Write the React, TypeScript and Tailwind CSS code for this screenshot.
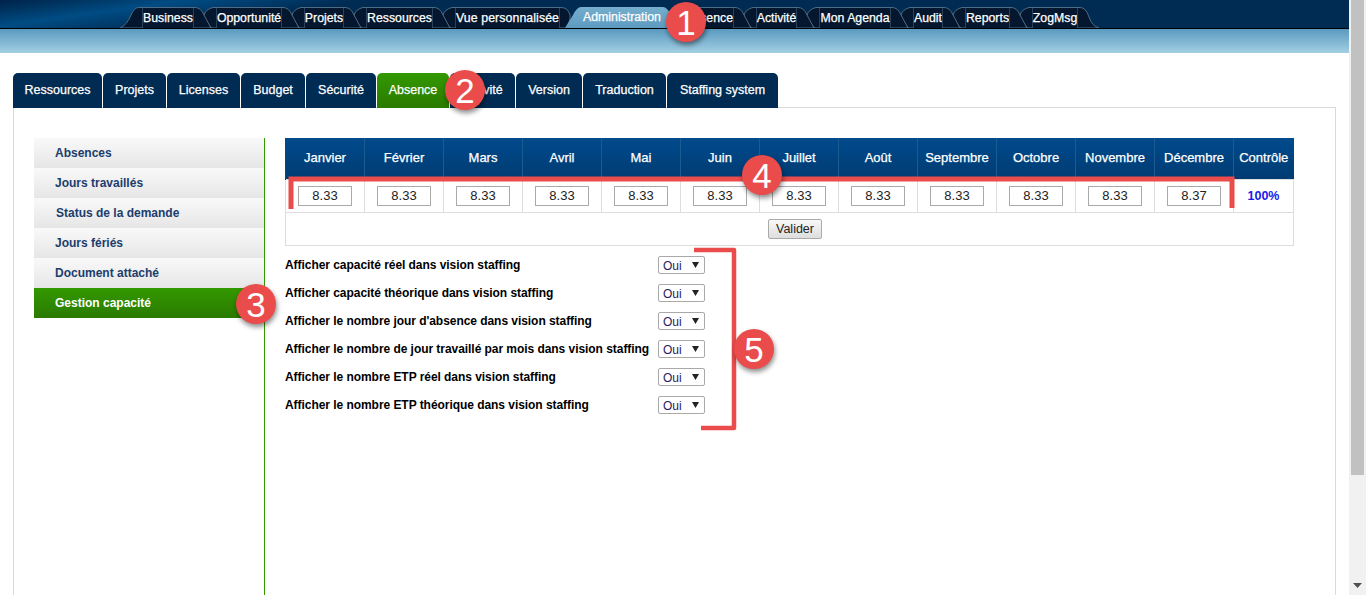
import React from "react";

const DARK = "#04172e";
const EDGE = "#4f6c86";

const topTabs = [
  { label: "Business", w: "w-[50px] justify-center" },
  { label: "Opportunité", w: "w-[64px] justify-center" },
  { label: "Projets", w: "w-[38px] justify-center" },
  { label: "Ressources", w: "w-[65px] justify-center" },
  { label: "Vue personnalisée", w: "w-[103px] justify-center tracking-[0.1px]" },
  { label: "Administration", w: "w-[78px] justify-center", active: true },
  { label: "Présence", w: "w-[48px] justify-end" },
  { label: "Activité", w: "w-[39px] justify-center" },
  { label: "Mon Agenda", w: "w-[70px] justify-center" },
  { label: "Audit", w: "w-[28px] justify-center" },
  { label: "Reports", w: "w-[43px] justify-center" },
  { label: "ZogMsg", w: "w-[44px] justify-center" },
];

const subTabs = [
  { label: "Ressources", w: "w-[89px]" },
  { label: "Projets", w: "w-[63px]" },
  { label: "Licenses", w: "w-[73px]" },
  { label: "Budget", w: "w-[64px]" },
  { label: "Sécurité", w: "w-[70px]" },
  { label: "Absence", w: "w-[72px]", active: true },
  { label: "Activité", w: "w-[65px]" },
  { label: "Version", w: "w-[66px]" },
  { label: "Traduction", w: "w-[83px]" },
  { label: "Staffing system", w: "w-[111px]" },
];

const sideItems = ["Absences", "Jours travaillés", "Status de la demande", "Jours fériés", "Document attaché", "Gestion capacité"];

const months = ["Janvier", "Février", "Mars", "Avril", "Mai", "Juin", "Juillet", "Août", "Septembre", "Octobre", "Novembre", "Décembre"];
const values = ["8.33", "8.33", "8.33", "8.33", "8.33", "8.33", "8.33", "8.33", "8.33", "8.33", "8.33", "8.37"];

const settings = [
  "Afficher capacité réel dans vision staffing",
  "Afficher capacité théorique dans vision staffing",
  "Afficher le nombre jour d'absence dans vision staffing",
  "Afficher le nombre de jour travaillé par mois dans vision staffing",
  "Afficher le nombre ETP réel dans vision staffing",
  "Afficher le nombre ETP théorique dans vision staffing",
];

// joint between two top tabs, 24px wide, the tab drawn active goes on top
function TabJoint({ leftActive, rightActive }: { leftActive?: boolean; rightActive?: boolean }) {
  if (rightActive) {
    return (
      <svg width="24" height="21" className="block shrink-0">
        <path d="M0 0.5L2 0.5Q9 0.5 11 8Q12 13 7 21L0 21Z" fill={DARK} stroke={EDGE} />
        <path d="M24 0L22 0Q18 0 14 8L6 21L24 21Z" fill="url(#activeTab)" />
      </svg>
    );
  }
  if (leftActive) {
    return (
      <svg width="24" height="21" className="block shrink-0">
        <path d="M24 0.5L20 0.5Q13 2 11 8Q10 14 19 21L24 21Z" fill={DARK} stroke={EDGE} />
        <path d="M0 0L2 0Q6 0 10 8L18 21L0 21Z" fill="url(#activeTab)" />
      </svg>
    );
  }
  return (
    <svg width="24" height="21" className="block shrink-0">
      <path d="M24 0.5L20 0.5Q13 2 11 8Q10 14 19 21L24 21Z" fill={DARK} stroke={EDGE} />
      <path d="M0 0.5L2 0.5Q8 0.5 11 8L18 21L0 21Z" fill={DARK} stroke={EDGE} />
    </svg>
  );
}

function TopNav() {
  return (
    <div className="flex h-[28px] items-end bg-[linear-gradient(172deg,#00234a_0%,#00305a_4%,#004c84_12%,#002b52_24%)] pl-[120px]">
      <svg width="0" height="0" className="absolute">
        <defs>
          <linearGradient id="activeTab" x1="0" y1="0" x2="0" y2="1">
            <stop offset="0" stopColor="#75aecd" />
            <stop offset="1" stopColor="#5d9bc0" />
          </linearGradient>
        </defs>
      </svg>
      <svg width="23" height="21" className="block shrink-0">
        <path d="M0 21Q7 18 11 8Q14 0.5 19 0.5L23 0.5L23 21Z" fill={DARK} stroke={EDGE} />
      </svg>
      {topTabs.map((t, i) => (
        <React.Fragment key={t.label}>
          <div
            className={`flex h-[21px] shrink-0 items-center whitespace-nowrap text-[12.3px] text-white [-webkit-text-stroke:0.25px_white] ${t.w} ${
              t.active ? "bg-gradient-to-b from-[#75aecd] to-[#5d9bc0]" : "border-t border-[#4f6c86] bg-[#04172e]"
            }`}
          >
            {t.label}
          </div>
          {i < topTabs.length - 1 && <TabJoint leftActive={t.active} rightActive={topTabs[i + 1].active} />}
        </React.Fragment>
      ))}
      <svg width="23" height="21" className="block shrink-0">
        <path d="M0 0.5L3 0.5Q9 0.5 12 10Q15 19 22 21L0 21Z" fill={DARK} stroke={EDGE} />
      </svg>
    </div>
  );
}

function SubTabs() {
  return (
    <div className="relative z-10 -mb-px flex h-[35px] gap-px">
      {subTabs.map((t) => (
        <div
          key={t.label}
          className={`flex items-center justify-center whitespace-nowrap rounded-t-[5px] text-[12.5px] text-white [-webkit-text-stroke:0.25px_white] ${t.w} ${
            t.active ? "bg-gradient-to-b from-[#339900] to-[#2a7a00]" : "bg-[#002b52]"
          }`}
        >
          {t.label}
        </div>
      ))}
    </div>
  );
}

function Sidebar() {
  return (
    <div className="h-[457px] w-[231px] shrink-0 border-r border-[#339900]">
      {sideItems.map((s, i) => {
        const active = i === sideItems.length - 1;
        return (
          <div
            key={s}
            className={`flex h-[30px] items-center text-[12px] font-bold ${i === 2 ? "pl-[22px]" : "pl-[21px]"} ${
              active ? "bg-gradient-to-b from-[#339900] to-[#2a7a00] text-white" : "bg-gradient-to-b from-[#f9f9f9] to-[#e6e6e6] text-[#1b3d6d]"
            }`}
          >
            {s}
          </div>
        );
      })}
    </div>
  );
}

function CapacityTable() {
  return (
    <table className="w-[1009px] table-fixed border-collapse text-[12.5px]">
      <thead>
        <tr className="h-[41px] bg-gradient-to-b from-[#004b8d] to-[#003b72] text-white">
          {months.map((m, i) => (
            <th
              key={m}
              className={`w-[79px] border-r border-[#1c5a92] pb-px text-[13px] font-normal [-webkit-text-stroke:0.25px_white] ${i === 0 ? "border-l border-l-[#004b8d]" : ""}`}
            >
              {m}
            </th>
          ))}
          <th className="pb-px text-[13px] font-normal [-webkit-text-stroke:0.25px_white]">Contrôle</th>
        </tr>
      </thead>
      <tbody>
        <tr className="h-[33px]">
          {values.map((v, i) => (
            <td key={i} className="border border-[#dddddd] text-center">
              <input
                readOnly
                value={v}
                className="h-[20px] w-[54px] border border-[#aaaaaa] bg-white text-center align-middle text-[13px] text-[#222222] outline-none"
              />
            </td>
          ))}
          <td className="border border-[#dddddd] pt-px text-center font-bold text-[#1a1ae6]">100%</td>
        </tr>
        <tr className="h-[33px]">
          <td colSpan={13} className="border border-[#dddddd] pl-[11px] text-center">
            <button className="h-[20px] w-[54px] rounded-[2px] border border-[#aaaaaa] bg-gradient-to-b from-[#f8f8f8] to-[#dedede] align-middle text-[12.5px] text-[#222222]">
              Valider
            </button>
          </td>
        </tr>
      </tbody>
    </table>
  );
}

function SettingRows() {
  return (
    <div className="mt-[5px]">
      {settings.map((s) => (
        <div key={s} className="flex h-[28px] items-center">
          <div className="w-[373px] whitespace-nowrap text-[12px] font-bold tracking-[-0.05px] text-black">{s}</div>
          <div className="relative h-[18px] w-[47px]">
            <select className="block h-full w-full appearance-none rounded-[2px] border border-[#a9a9a9] bg-white pl-[4px] text-[12px] text-[#2a1a5e] outline-none">
              <option>Oui</option>
            </select>
            <svg width="7" height="6" className="absolute left-[34px] top-[6px]">
              <path d="M0 0L7 0L3.5 6Z" fill="#222222" />
            </svg>
          </div>
        </div>
      ))}
    </div>
  );
}

function Badge({ n, pos }: { n: number; pos: string }) {
  return (
    <div
      className={`absolute z-20 flex h-[40px] w-[40px] items-center justify-center rounded-full bg-[#ea4b4b] text-[35px] leading-none text-white shadow-[1px_3px_5px_rgba(0,0,0,0.45)] ${pos}`}
    >
      {n}
    </div>
  );
}

// red marks drawn over the screenshot
function Annotations() {
  return (
    <>
      <svg width="1349" height="595" className="pointer-events-none absolute left-0 top-0 z-20">
        <path d="M291 209L291 179L1232 179L1232 208" fill="none" stroke="#ea4b4b" strokeWidth="5" />
        <path d="M694 250L734 250L734 428L701 428" fill="none" stroke="#ea4b4b" strokeWidth="4.5" strokeLinejoin="round" />
      </svg>
      <Badge n={1} pos="left-[666px] top-[2px]" />
      <Badge n={2} pos="left-[445px] top-[70px]" />
      <Badge n={3} pos="left-[236px] top-[284px]" />
      <Badge n={4} pos="left-[742px] top-[155px]" />
      <Badge n={5} pos="left-[734px] top-[329px]" />
    </>
  );
}

export default function App() {
  return (
    <div className="flex h-[595px] w-[1366px] overflow-hidden bg-white font-['Liberation_Sans',Arial,sans-serif]">
      <div className="relative w-[1349px] shrink-0">
        <TopNav />
        <div className="h-[25px] border-t border-black bg-gradient-to-b from-[#5a9abf] to-[#a3cfe3]" />
        <div className="ml-[13px] mr-[13px] pt-[20px]">
          <SubTabs />
          <div className="flex h-[600px] border border-b-0 border-[#d9d9d9] pl-[20px] pt-[30px]">
            <Sidebar />
            <div className="ml-[20px]">
              <CapacityTable />
              <SettingRows />
            </div>
          </div>
        </div>
        <Annotations />
      </div>
      <div className="relative w-[17px] shrink-0 bg-[#f1f1f1]">
        <div className="ml-[2px] h-[475px] w-[13px] bg-[#c1c1c1]" />
        <svg width="9" height="5" className="absolute bottom-[7px] left-[4px]">
          <path d="M0 0L9 0L4.5 5Z" fill="#505050" />
        </svg>
      </div>
    </div>
  );
}
